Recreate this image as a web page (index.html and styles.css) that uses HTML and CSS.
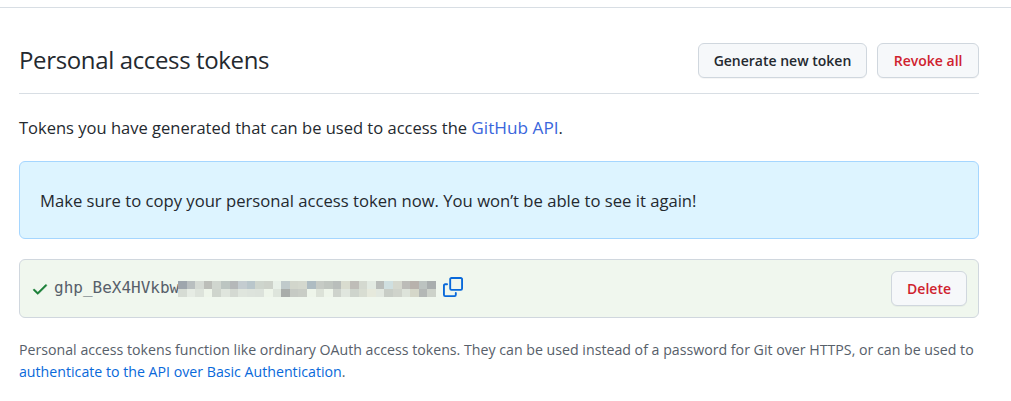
FILE: index.html
```html
<!DOCTYPE html>
<html lang="en">
<head>
    <meta charset="UTF-8">
    <meta name="viewport" content="width=device-width, initial-scale=1.0">
    <title>Personal access tokens</title>
    <link rel="stylesheet" href="styles.css">
</head>
<body>
    <main class="contain">
        <header class="head">
            <h2>Personal access tokens</h2>
            <div class="actions">
                <a class="btn" href="#">Generate new token</a>
                <a class="btn danger revoke" href="#">Revoke all</a>
            </div>
        </header>
        <p class="intro">Tokens you have generated that can be used to access the <a href="#" class="api">GitHub API</a>.</p>
        <div class="flash">Make sure to copy your personal access token now. You won’t be able to see it again!</div>
        <div class="token">
            <svg class="check" width="18" height="18" viewBox="0 0 16 16"><path fill="#1a7f37" stroke="#1a7f37" stroke-width="0.4" d="M13.78 4.22a.75.75 0 0 1 0 1.06l-7.25 7.25a.75.75 0 0 1-1.06 0L2.22 9.28a.75.75 0 0 1 1.06-1.06L6 10.94l6.72-6.72a.75.75 0 0 1 1.06 0Z"/></svg>
            <code>ghp_BeX4HVkbw</code>
            <svg class="mosaic" width="258" height="16" viewBox="0 0 30 2" preserveAspectRatio="none" shape-rendering="crispEdges">
                <rect x="0" y="0" width="1" height="1" fill="#9ea6ad"/><rect x="1" y="0" width="1" height="1" fill="#b9bfc0"/><rect x="2" y="0" width="1" height="1" fill="#d5dad4"/><rect x="3" y="0" width="1" height="1" fill="#bcbeb9"/><rect x="4" y="0" width="1" height="1" fill="#d0d6cf"/><rect x="5" y="0" width="1" height="1" fill="#bcc5c1"/><rect x="6" y="0" width="1" height="1" fill="#b5b8b9"/><rect x="7" y="0" width="1" height="1" fill="#c4ccd0"/><rect x="8" y="0" width="1" height="1" fill="#b9c6cb"/><rect x="9" y="0" width="1" height="1" fill="#ced5cd"/><rect x="10" y="0" width="1" height="1" fill="#cdd2ca"/><rect x="11" y="0" width="1" height="1" fill="#e8f0e8"/><rect x="12" y="0" width="1" height="1" fill="#c0cacb"/><rect x="13" y="0" width="1" height="1" fill="#d2d6cc"/><rect x="14" y="0" width="1" height="1" fill="#d4d8ce"/><rect x="15" y="0" width="1" height="1" fill="#aebcc2"/><rect x="16" y="0" width="1" height="1" fill="#c6cbc5"/><rect x="17" y="0" width="1" height="1" fill="#c0c6c0"/><rect x="18" y="0" width="1" height="1" fill="#b9bebb"/><rect x="19" y="0" width="1" height="1" fill="#d9dccf"/><rect x="20" y="0" width="1" height="1" fill="#bfbdb8"/><rect x="21" y="0" width="1" height="1" fill="#d4d9d0"/><rect x="22" y="0" width="1" height="1" fill="#e2eae2"/><rect x="23" y="0" width="1" height="1" fill="#b9bdba"/><rect x="24" y="0" width="1" height="1" fill="#cfdfe0"/><rect x="25" y="0" width="1" height="1" fill="#d5d8ce"/><rect x="26" y="0" width="1" height="1" fill="#bcbcb8"/><rect x="27" y="0" width="1" height="1" fill="#b8b2ac"/><rect x="28" y="0" width="1" height="1" fill="#bcc3c0"/><rect x="29" y="0" width="1" height="1" fill="#a9aeae"/>
                <rect x="0" y="1" width="1" height="1" fill="#d6dcd4"/><rect x="1" y="1" width="1" height="1" fill="#e6ece4"/><rect x="2" y="1" width="1" height="1" fill="#dde3db"/><rect x="3" y="1" width="1" height="1" fill="#eef5ea"/><rect x="4" y="1" width="1" height="1" fill="#cfd5cd"/><rect x="5" y="1" width="1" height="1" fill="#dfe5dd"/><rect x="6" y="1" width="1" height="1" fill="#d4d9d2"/><rect x="7" y="1" width="1" height="1" fill="#dfe5dd"/><rect x="8" y="1" width="1" height="1" fill="#dde3dc"/><rect x="9" y="1" width="1" height="1" fill="#dce2db"/><rect x="10" y="1" width="1" height="1" fill="#eef5ea"/><rect x="11" y="1" width="1" height="1" fill="#dee5dc"/><rect x="12" y="1" width="1" height="1" fill="#a9adaa"/><rect x="13" y="1" width="1" height="1" fill="#c6cac4"/><rect x="14" y="1" width="1" height="1" fill="#c9cdc6"/><rect x="15" y="1" width="1" height="1" fill="#eef5ea"/><rect x="16" y="1" width="1" height="1" fill="#dce2d8"/><rect x="17" y="1" width="1" height="1" fill="#eef5ea"/><rect x="18" y="1" width="1" height="1" fill="#ced3cc"/><rect x="19" y="1" width="1" height="1" fill="#e0e6de"/><rect x="20" y="1" width="1" height="1" fill="#ced4cc"/><rect x="21" y="1" width="1" height="1" fill="#d8ddd2"/><rect x="22" y="1" width="1" height="1" fill="#e6e9dc"/><rect x="23" y="1" width="1" height="1" fill="#e2e8e0"/><rect x="24" y="1" width="1" height="1" fill="#c8cdc6"/><rect x="25" y="1" width="1" height="1" fill="#cfd3cb"/><rect x="26" y="1" width="1" height="1" fill="#dde3da"/><rect x="27" y="1" width="1" height="1" fill="#d5d7c9"/><rect x="28" y="1" width="1" height="1" fill="#b4b8b6"/><rect x="29" y="1" width="1" height="1" fill="#cdd2ca"/>
            </svg>
            <svg class="copy" width="20" height="20" viewBox="0 0 16 16"><path fill="#0969da" d="M0 6.75C0 5.784.784 5 1.75 5h1.5a.75.75 0 0 1 0 1.5h-1.5a.25.25 0 0 0-.25.25v7.5c0 .138.112.25.25.25h7.5a.25.25 0 0 0 .25-.25v-1.5a.75.75 0 0 1 1.5 0v1.5A1.75 1.75 0 0 1 9.25 16h-7.5A1.75 1.75 0 0 1 0 14.25Z"/><path fill="#0969da" d="M5 1.75C5 .784 5.784 0 6.75 0h7.5C15.216 0 16 .784 16 1.75v7.5A1.75 1.75 0 0 1 14.25 11h-7.5A1.75 1.75 0 0 1 5 9.25Zm1.75-.25a.25.25 0 0 0-.25.25v7.5c0 .138.112.25.25.25h7.5a.25.25 0 0 0 .25-.25v-7.5a.25.25 0 0 0-.25-.25Z"/></svg>
            <a class="btn danger delete" href="#">Delete</a>
        </div>
        <p class="note">Personal access tokens function like ordinary OAuth access tokens. They can be used instead of a password for Git over HTTPS, or can be used to <a href="#">authenticate to the API over Basic Authentication</a>.</p>
    </main>
</body>
</html>
```

FILE: styles.css
```css
body {
    margin: 0;
    padding: 0;
    background: #fff;
    color: #24292f;
    font-family: "Open Sans", "Noto Sans", sans-serif;
    font-size: 16px;
}

.contain {
    margin-top: 7px;
    border-top: 1px solid #d8dee4;
    padding: 35px 32px 0 19px;
}

.head {
    display: flex;
    justify-content: space-between;
    height: 50px;
    border-bottom: 1px solid #d8dee4;
    align-items: flex-start;
}

h2 {
    margin: 0;
    font-size: 24px;
    font-weight: 400;
    line-height: 33px;
    letter-spacing: -0.36px;
}

.actions {
    display: flex;
    gap: 10px;
}

.btn {
    display: inline-block;
    box-sizing: border-box;
    height: 35px;
    line-height: 33px;
    padding: 0 15px;
    background: #f6f8fa;
    border: 1px solid #d0d7de;
    border-radius: 6px;
    color: #24292f;
    font-size: 14px;
    font-weight: 600;
    text-decoration: none;
    box-shadow: 0 1px 0 rgba(27, 31, 36, 0.04);
}

.danger {
    color: #cf222e;
}

.revoke {
    padding: 0 15.5px;
}

.intro {
    margin: 22px 0 21px;
    font-size: 16.53px;
    line-height: 24px;
}

.intro a {
    color: #3a66dc;
    font-size: 17.2px;
    text-decoration: none;
}

.flash {
    box-sizing: border-box;
    height: 78px;
    padding: 0 20px;
    display: flex;
    align-items: center;
    background: #ddf4ff;
    border: 1px solid #a5d6ff;
    border-radius: 6px;
    font-size: 16.65px;
}

.token {
    box-sizing: border-box;
    height: 59px;
    margin-top: 20px;
    padding: 0 11px;
    display: flex;
    align-items: center;
    background: #f0f7ee;
    border: 1px solid #d0d7de;
    border-radius: 6px;
}

.check {
    margin-right: 5px;
}

code {
    font-family: "DejaVu Sans Mono", monospace;
    font-size: 16px;
    color: #57606a;
    margin-bottom: 2px;
}

.mosaic {
    margin-left: -1px;
}

.copy {
    margin-left: 7px;
    margin-bottom: 4px;
}

.delete {
    margin-left: auto;
}

.note {
    margin: 21px 0 0;
    font-size: 14.18px;
    line-height: 22px;
    color: #57606a;
}

.note a {
    color: #0969da;
    text-decoration: none;
}
```
